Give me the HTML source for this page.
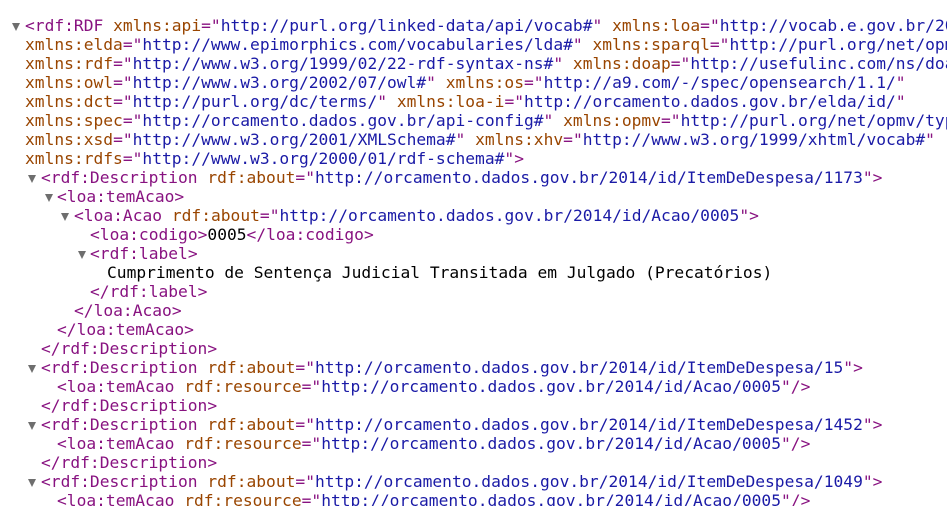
<!DOCTYPE html>
<html style="overflow:hidden"><head><meta charset="utf-8"><style>
html,body{margin:0;background:#fff;width:947px;height:506px;overflow:hidden}
body{position:relative;font-family:"DejaVu Sans Mono","Liberation Mono",monospace;font-size:16.25px}
#w{position:absolute;left:0;top:2px;width:947px;height:504px;overflow:hidden}
.l{position:absolute;white-space:pre;height:19px;line-height:19px}
.t{color:#881280}.a{color:#994500}.v{color:#1a1aa6}.x{color:#000}
.ar{position:absolute;width:0;height:0;border-left:4.5px solid transparent;border-right:4.5px solid transparent;border-top:8px solid #6e6e6e}
</style></head><body><div id="w">
<div class="ar" style="left:12px;top:21px"></div>
<div class="l" style="left:25px;top:14px"><span class="t">&lt;rdf:RDF</span> <span class="a">xmlns:api</span><span class="t">="</span><span class="v">http://purl.org/linked-data/api/vocab#</span><span class="t">"</span> <span class="a">xmlns:loa</span><span class="t">="</span><span class="v">http://vocab.e.gov.br/2013/09/loa#</span><span class="t">"</span></div>
<div class="l" style="left:25px;top:33px"><span class="a">xmlns:elda</span><span class="t">="</span><span class="v">http://www.epimorphics.com/vocabularies/lda#</span><span class="t">"</span> <span class="a">xmlns:sparql</span><span class="t">="</span><span class="v">http://purl.org/net/opmv/types/sparql#</span><span class="t">"</span></div>
<div class="l" style="left:25px;top:52px"><span class="a">xmlns:rdf</span><span class="t">="</span><span class="v">http://www.w3.org/1999/02/22-rdf-syntax-ns#</span><span class="t">"</span> <span class="a">xmlns:doap</span><span class="t">="</span><span class="v">http://usefulinc.com/ns/doap#</span><span class="t">"</span></div>
<div class="l" style="left:25px;top:71px"><span class="a">xmlns:owl</span><span class="t">="</span><span class="v">http://www.w3.org/2002/07/owl#</span><span class="t">"</span> <span class="a">xmlns:os</span><span class="t">="</span><span class="v">http://a9.com/-/spec/opensearch/1.1/</span><span class="t">"</span></div>
<div class="l" style="left:25px;top:90px"><span class="a">xmlns:dct</span><span class="t">="</span><span class="v">http://purl.org/dc/terms/</span><span class="t">"</span> <span class="a">xmlns:loa-i</span><span class="t">="</span><span class="v">http://orcamento.dados.gov.br/elda/id/</span><span class="t">"</span></div>
<div class="l" style="left:25px;top:109px"><span class="a">xmlns:spec</span><span class="t">="</span><span class="v">http://orcamento.dados.gov.br/api-config#</span><span class="t">"</span> <span class="a">xmlns:opmv</span><span class="t">="</span><span class="v">http://purl.org/net/opmv/types/common#</span><span class="t">"</span></div>
<div class="l" style="left:25px;top:128px"><span class="a">xmlns:xsd</span><span class="t">="</span><span class="v">http://www.w3.org/2001/XMLSchema#</span><span class="t">"</span> <span class="a">xmlns:xhv</span><span class="t">="</span><span class="v">http://www.w3.org/1999/xhtml/vocab#</span><span class="t">"</span></div>
<div class="l" style="left:25px;top:147px"><span class="a">xmlns:rdfs</span><span class="t">="</span><span class="v">http://www.w3.org/2000/01/rdf-schema#</span><span class="t">"&gt;</span></div>

<div class="ar" style="left:28px;top:173px"></div>
<div class="l" style="left:41px;top:166px"><span class="t">&lt;rdf:Description</span> <span class="a">rdf:about</span><span class="t">="</span><span class="v">http://orcamento.dados.gov.br/2014/id/ItemDeDespesa/1173</span><span class="t">"&gt;</span></div>
<div class="ar" style="left:45px;top:192px"></div>
<div class="l" style="left:57px;top:185px"><span class="t">&lt;loa:temAcao&gt;</span></div>
<div class="ar" style="left:61px;top:211px"></div>
<div class="l" style="left:74px;top:204px"><span class="t">&lt;loa:Acao</span> <span class="a">rdf:about</span><span class="t">="</span><span class="v">http://orcamento.dados.gov.br/2014/id/Acao/0005</span><span class="t">"&gt;</span></div>
<div class="l" style="left:90px;top:223px"><span class="t">&lt;loa:codigo&gt;</span><span class="x">0005</span><span class="t">&lt;/loa:codigo&gt;</span></div>
<div class="ar" style="left:78px;top:249px"></div>
<div class="l" style="left:90px;top:242px"><span class="t">&lt;rdf:label&gt;</span></div>
<div class="l" style="left:107px;top:261px"><span class="x">Cumprimento de Sentença Judicial Transitada em Julgado (Precatórios)</span></div>
<div class="l" style="left:90px;top:280px"><span class="t">&lt;/rdf:label&gt;</span></div>
<div class="l" style="left:74px;top:299px"><span class="t">&lt;/loa:Acao&gt;</span></div>
<div class="l" style="left:57px;top:318px"><span class="t">&lt;/loa:temAcao&gt;</span></div>
<div class="l" style="left:41px;top:337px"><span class="t">&lt;/rdf:Description&gt;</span></div>

<div class="ar" style="left:28px;top:363px"></div>
<div class="l" style="left:41px;top:356px"><span class="t">&lt;rdf:Description</span> <span class="a">rdf:about</span><span class="t">="</span><span class="v">http://orcamento.dados.gov.br/2014/id/ItemDeDespesa/15</span><span class="t">"&gt;</span></div>
<div class="l" style="left:57px;top:375px"><span class="t">&lt;loa:temAcao</span> <span class="a">rdf:resource</span><span class="t">="</span><span class="v">http://orcamento.dados.gov.br/2014/id/Acao/0005</span><span class="t">"/&gt;</span></div>
<div class="l" style="left:41px;top:394px"><span class="t">&lt;/rdf:Description&gt;</span></div>

<div class="ar" style="left:28px;top:420px"></div>
<div class="l" style="left:41px;top:413px"><span class="t">&lt;rdf:Description</span> <span class="a">rdf:about</span><span class="t">="</span><span class="v">http://orcamento.dados.gov.br/2014/id/ItemDeDespesa/1452</span><span class="t">"&gt;</span></div>
<div class="l" style="left:57px;top:432px"><span class="t">&lt;loa:temAcao</span> <span class="a">rdf:resource</span><span class="t">="</span><span class="v">http://orcamento.dados.gov.br/2014/id/Acao/0005</span><span class="t">"/&gt;</span></div>
<div class="l" style="left:41px;top:451px"><span class="t">&lt;/rdf:Description&gt;</span></div>

<div class="ar" style="left:28px;top:477px"></div>
<div class="l" style="left:41px;top:470px"><span class="t">&lt;rdf:Description</span> <span class="a">rdf:about</span><span class="t">="</span><span class="v">http://orcamento.dados.gov.br/2014/id/ItemDeDespesa/1049</span><span class="t">"&gt;</span></div>
<div class="l" style="left:57px;top:489px"><span class="t">&lt;loa:temAcao</span> <span class="a">rdf:resource</span><span class="t">="</span><span class="v">http://orcamento.dados.gov.br/2014/id/Acao/0005</span><span class="t">"/&gt;</span></div>
</div></body></html>
